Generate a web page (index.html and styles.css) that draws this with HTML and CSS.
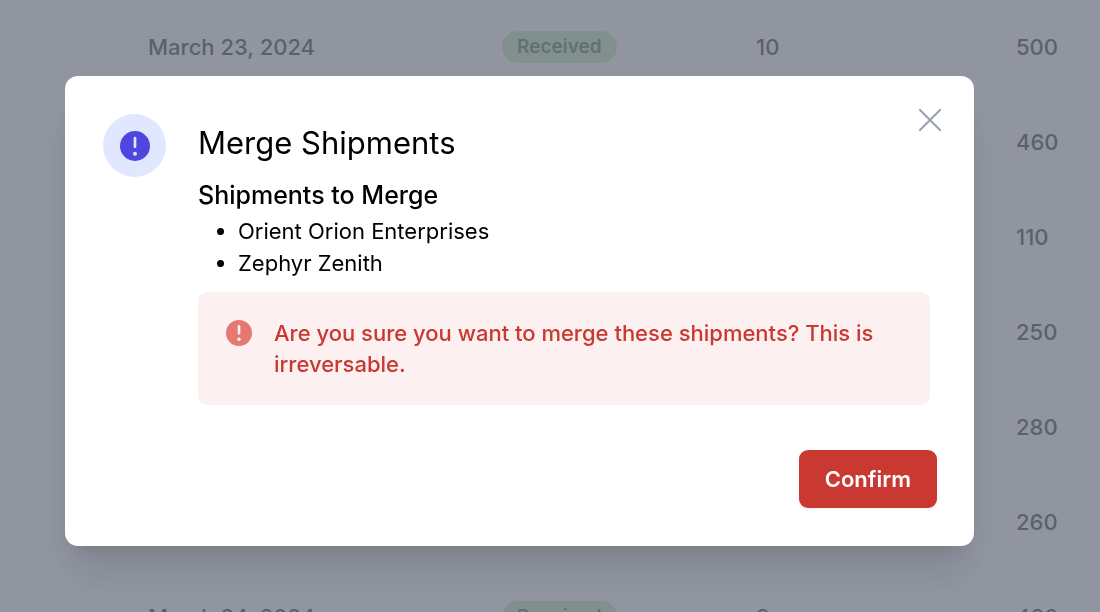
FILE: index.html
```
<!doctype html>
<html lang="en">
<head>
    <meta charset="UTF-8">
    <meta name="viewport" content="width=device-width, initial-scale=1.0">
    <title>Merge Shipments</title>
    <link rel="stylesheet" href="styles.css">
</head>
<body>
<main class="page">
    <table class="shipments">
        <colgroup>
            <col class="col-date">
            <col class="col-status">
            <col class="col-items">
            <col class="col-qty">
        </colgroup>
        <tbody>
            <tr><td>March 23, 2024</td><td><span class="badge">Received</span></td><td>10</td><td>500</td></tr>
            <tr><td></td><td></td><td></td><td>460</td></tr>
            <tr><td></td><td></td><td></td><td>110</td></tr>
            <tr><td></td><td></td><td></td><td>250</td></tr>
            <tr><td></td><td></td><td></td><td>280</td></tr>
            <tr><td></td><td></td><td></td><td>260</td></tr>
            <tr><td>March 24, 2024</td><td><span class="badge">Received</span></td><td>9</td><td>480</td></tr>
        </tbody>
    </table>
</main>

<div class="overlay">
    <div class="modal" role="dialog" aria-modal="true" aria-labelledby="modal-title">
        <button type="button" class="close" aria-label="Close">
            <svg viewBox="0 0 24 24" fill="none" stroke="currentColor" stroke-width="2.2" stroke-linecap="round">
                <path d="M2 2L22 22M22 2L2 22"/>
            </svg>
        </button>
        <div class="modal-body">
            <div class="modal-icon">
                <svg viewBox="0 0 30 30">
                    <circle cx="15" cy="15" r="15" fill="#4f46e0"/>
                    <path d="M15 7.2V15.8" stroke="#e0e7ff" stroke-width="2.7" stroke-linecap="round"/>
                    <circle cx="15" cy="22.8" r="2" fill="#e0e7ff"/>
                </svg>
            </div>
            <div class="modal-content">
                <h2 id="modal-title">Merge Shipments</h2>
                <h3>Shipments to Merge</h3>
                <ul>
                    <li>Orient Orion Enterprises</li>
                    <li>Zephyr Zenith</li>
                </ul>
                <div class="warning">
                    <svg viewBox="0 0 26 26">
                        <circle cx="13" cy="13" r="13" fill="#e67872"/>
                        <path d="M13 6.3V13.2" stroke="#fcf1f0" stroke-width="2.6" stroke-linecap="round"/>
                        <circle cx="13" cy="19.2" r="1.7" fill="#fcf1f0"/>
                    </svg>
                    <p>Are you sure you want to merge these shipments? This is irreversable.</p>
                </div>
            </div>
        </div>
        <div class="modal-footer">
            <button type="button" class="confirm">Confirm</button>
        </div>
    </div>
</div>
</body>
</html>
```
FILE: styles.css
```
* {
    box-sizing: border-box;
}

body {
    margin: 0;
    background-color: #fff;
    font-family: Inter, "Liberation Sans", sans-serif;
    font-size: 22px;
    color: #000;
}

h2, h3, p, ul {
    margin: 0;
}

.page {
    height: 100vh;
    overflow: hidden;
}

/* shipments list behind the dialog */
.shipments {
    width: 100%;
    margin-top: -1px;
    table-layout: fixed;
    border-collapse: collapse;
    font-weight: 500;
    color: #2b2e3a;
}

.shipments tr {
    height: 95px;
}

.shipments td {
    padding: 0;
    white-space: nowrap;
    vertical-align: middle;
}

.shipments td:first-child {
    padding-left: 148px;
}

.col-date {
    width: 502px;
}

.col-status {
    width: 254px;
}

.col-items {
    width: 260px;
}

.badge {
    display: inline-block;
    padding: 0 15px;
    border-radius: 16px;
    background-color: #c8e6bc;
    color: #3c7050;
    font-size: 19px;
    font-weight: 600;
    line-height: 32px;
    vertical-align: middle;
}

/* dialog */
.overlay {
    position: fixed;
    inset: 0;
    padding: 76px 126px 0 65px;
    overflow: hidden;
    background-color: rgba(107, 114, 128, 0.75);
}

.modal {
    position: relative;
    padding: 38px 37px 38px 38px;
    border-radius: 13px;
    background-color: #fff;
    box-shadow: 0 32px 40px -8px rgba(0, 0, 0, 0.1), 0 13px 16px -10px rgba(0, 0, 0, 0.1);
}

.close {
    position: absolute;
    top: 32px;
    right: 32px;
    padding: 0;
    border: none;
    background: none;
    color: #9ca3af;
    cursor: pointer;
}

.close svg {
    display: block;
    width: 24px;
    height: 24px;
}

.modal-body {
    display: flex;
    gap: 32px;
}

.modal-icon {
    display: flex;
    flex: none;
    align-items: center;
    justify-content: center;
    width: 63px;
    height: 63px;
    border-radius: 50%;
    background-color: #e0e7ff;
}

.modal-icon svg {
    width: 30px;
    height: 30px;
}

.modal-content {
    flex: 1;
    padding-right: 7px;
}

.modal-content h2 {
    padding-top: 8px;
    font-size: 31px;
    font-weight: 400;
    line-height: 42px;
}

.modal-content h3 {
    margin-top: 12px;
    font-size: 25px;
    font-weight: 500;
    line-height: 39px;
}

.modal-content ul {
    padding-left: 40px;
    line-height: 32px;
}

.warning {
    display: flex;
    gap: 22px;
    margin-top: 13px;
    padding: 26px 28px 25px;
    border-radius: 9px;
    background-color: #fcf1f0;
    color: #c93831;
    font-weight: 500;
    line-height: 31px;
}

.warning svg {
    flex: none;
    width: 26px;
    height: 26px;
    margin-top: 2px;
}

.modal-footer {
    display: flex;
    justify-content: flex-end;
    margin-top: 45px;
}

.confirm {
    padding: 0 26px;
    border: none;
    border-radius: 9px;
    background-color: #c93831;
    box-shadow: 0 2px 3px rgba(0, 0, 0, 0.05);
    color: #fff;
    font-family: inherit;
    font-size: 22px;
    font-weight: 600;
    line-height: 58px;
    cursor: pointer;
}

.confirm:hover {
    background-color: #b22f29;
}
```
